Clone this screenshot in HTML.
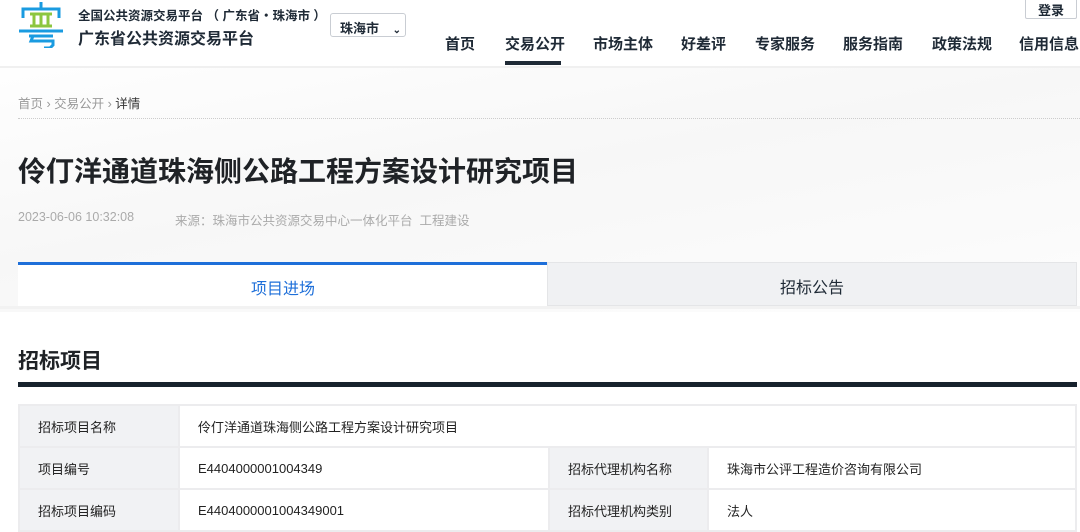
<!DOCTYPE html>
<html><head><meta charset="utf-8"><style>
*{margin:0;padding:0;box-sizing:border-box}
body{width:1080px;height:528px;overflow:hidden;background:#fff;font-family:"Liberation Sans","Noto Sans CJK SC",sans-serif;color:#222;position:relative}
.a{position:absolute;white-space:nowrap}
.hero{position:absolute;left:0;top:68px;width:1080px;height:244px;background:linear-gradient(170deg,#fefefe 0%,#f7f7f7 45%,#fafafa 75%,#fdfdfd 100%)}
.nav span{position:absolute;top:33px;font-size:15px;font-weight:bold;color:#1f2a36}
td{border:2px solid #ececee;font-size:13px;color:#222;padding-left:18px;height:42px}
td.l{background:#f1f2f4}
</style></head><body>
<div class="a" style="left:0;top:66px;width:1080px;height:3px;background:#f0f0f0"></div>
<div class="hero"></div>
<svg class="a" style="left:17px;top:2px" width="48" height="46" viewBox="0 0 48 46">
<g fill="none" stroke="#1a9be0" stroke-width="3">
<path d="M24 0v7M6 16V7h36v9"/><path d="M2 29h44"/><path d="M12 34h24M16 34l-2 5h22v4l-3 3h-6"/></g>
<g fill="none" stroke="#8cc63f" stroke-width="3"><path d="M13 12h22M17 13v11M24 13v11M31 13v11M13 24h22"/></g>
</svg>
<div class="a" style="left:78px;top:5px;font-size:12.5px;font-weight:bold;color:#1f2a36">全国公共资源交易平台 （ 广东省・珠海市 ）</div>
<div class="a" style="left:78px;top:25px;font-size:16px;font-weight:bold;color:#1f2a36">广东省公共资源交易平台</div>
<div class="a" style="left:330px;top:13px;width:76px;height:24px;border:1px solid #c9cdd3;border-radius:3px;font-size:13px;font-weight:bold;color:#1f2a36;padding:4px 0 0 9px">珠海市 <span style="font-size:10px;margin-left:10px">⌄</span></div>
<div class="a" style="left:1025px;top:-4px;width:52px;height:23px;border:1px solid #c9cdd3;border-radius:2px;font-size:13px;font-weight:bold;color:#1f2a36;text-align:center;padding-top:3px">登录</div>
<div class="nav">
<span style="left:445px">首页</span><span style="left:505px">交易公开</span><span style="left:593px">市场主体</span><span style="left:681px">好差评</span><span style="left:755px">专家服务</span><span style="left:843px">服务指南</span><span style="left:932px">政策法规</span><span style="left:1019px">信用信息</span></div>
<div class="a" style="left:505px;top:61px;width:56px;height:4px;background:#1f2a36"></div>
<div class="a" style="left:18px;top:93px;font-size:12.5px;color:#999">首页 › 交易公开 › <span style="color:#333">详情</span></div>
<div class="a" style="left:18px;top:118px;width:1062px;border-top:1px dotted #ccc"></div>
<div class="a" style="left:18px;top:150px;font-size:28px;font-weight:bold;color:#1f2226">伶仃洋通道珠海侧公路工程方案设计研究项目</div>
<div class="a" style="left:18px;top:210px;font-size:12.5px;color:#aaa">2023-06-06 10:32:08</div>
<div class="a" style="left:175px;top:210px;font-size:12.5px;color:#aaa">来源：珠海市公共资源交易中心一体化平台&nbsp; 工程建设</div>
<div class="a" style="left:18px;top:262px;width:530px;height:44px;background:#fff;border-top:3px solid #1e6fd9;font-size:16px;color:#1e6fd9;text-align:center;padding-top:10px">项目进场</div>
<div class="a" style="left:547px;top:262px;width:530px;height:44px;background:#f0f1f3;border:1px solid #e4e5e7;font-size:16px;color:#1f2a36;text-align:center;padding-top:11px">招标公告</div>
<div class="a" style="left:0;top:306px;width:1080px;height:3px;background:#f2f2f2"></div>
<div class="a" style="left:18px;top:345px;font-size:21px;font-weight:bold;color:#1f2226">招标项目</div>
<div class="a" style="left:18px;top:382px;width:1059px;height:5px;background:#17222d"></div>
<table class="a" style="left:18px;top:404px;width:1059px;border-collapse:collapse">
<tr><td class="l" style="width:160px">招标项目名称</td><td colspan="3">伶仃洋通道珠海侧公路工程方案设计研究项目</td></tr>
<tr><td class="l">项目编号</td><td style="width:370px">E4404000001004349</td><td class="l" style="width:159px">招标代理机构名称</td><td>珠海市公评工程造价咨询有限公司</td></tr>
<tr><td class="l">招标项目编码</td><td>E4404000001004349001</td><td class="l">招标代理机构类别</td><td>法人</td></tr>
</table>
</body></html>
